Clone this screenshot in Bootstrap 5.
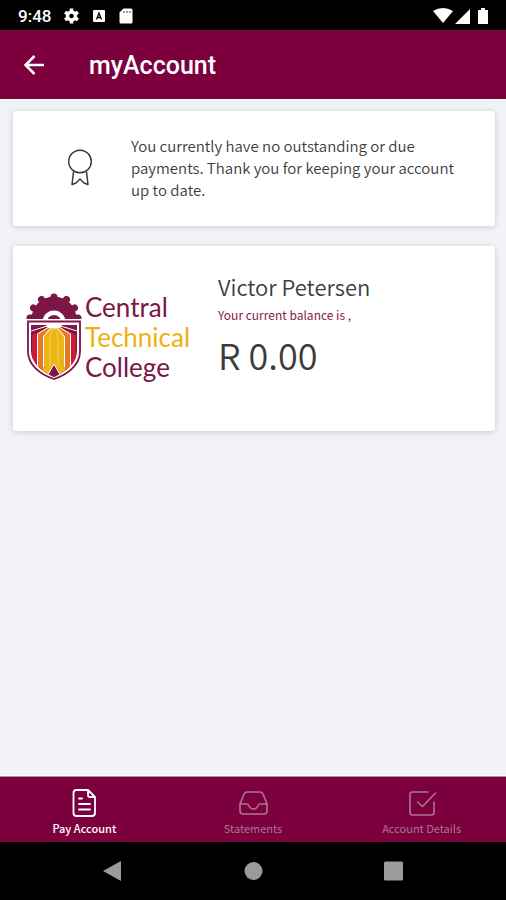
<!DOCTYPE html>
<html lang="en">
<head>
<meta charset="utf-8">
<meta name="viewport" content="width=device-width, initial-scale=1">
<title>myAccount</title>
<link href="https://cdn.jsdelivr.net/npm/bootstrap@5.3.0/dist/css/bootstrap.min.css" rel="stylesheet">
<style>
:root { --wine: #7c003d; }
body { font-family: "Noto Sans CJK SC", "Noto Sans", sans-serif; background: #f1f3f6; color: #3c3c3c; }
svg { display: block; flex: none; }
.status-bar { height: 30px; padding: 2px 16px 0 18px; gap: 12px; font: 500 17px/28px Roboto, sans-serif; }
.app-bar { background: var(--wine); height: 69px; padding: 4px 20px 0; gap: 42px; border-bottom: 1px solid #65102f; }
.app-bar h1 { font: 500 25px/32px Roboto, sans-serif; }
.panel { border: 0; border-radius: 3px; box-shadow: 0 1px 6px rgba(0, 0, 0, .17); }
.content { padding: 12px 11px 0 13px; gap: 20px; border-bottom: 1px solid #fff; }
.notice { padding: 24px 30px 25px 52px; gap: 36px; font-size: 15px; line-height: 22px; font-weight: 350; }
.account { padding: 24px 13px 28px; gap: 30px; min-height: 185px; }
.brand { gap: 3px; color: #7b1647; font: 26px/30px Lato, sans-serif; width: 162px; }
.brand .gold { color: #eeb111; }
.holder { font-size: 22px; line-height: 32px; font-weight: 350; }
.caption { font-size: 12px; line-height: 26px; color: #86204e; }
.amount { font-size: 36px; line-height: 52px; font-weight: 350; }
.tabs { background: var(--wine); height: 66px; border-top: 1px solid #b98ba0; }
.tabs a { color: #ab7690; font-size: 11px; line-height: 16px; padding-top: 10px; gap: 1px; }
.tabs a.active { color: #fff; font-weight: 500; }
.system-bar { height: 58px; }
</style>
<script src="https://cdn.jsdelivr.net/npm/bootstrap@5.3.0/dist/js/bootstrap.bundle.min.js"></script>
</head>
<body class="d-flex flex-column min-vh-100">
<div class="status-bar bg-black text-white d-flex align-items-center">
  <span>9:48</span>
  <svg width="70" height="18" viewBox="-4 0 70 18" fill="#fff" aria-hidden="true">
    <circle cx="4.500" cy="9" r="4" fill="none" stroke="#fff" stroke-width="3.400"/>
    <path d="M4.500 1.500v3M4.500 13.500v3M-2 5.200l3 1.800M8 11l3 1.800M11 5.200L8 7M1 11l-3 1.800" stroke="#fff" stroke-width="3.600"/>
    <rect x="26" y="3" width="12" height="12" rx="1"/>
    <path d="M29.500 12.500L32 6l2.500 6.500M30.500 10.500h3" fill="none" stroke="#000" stroke-width="1.300"/>
    <path d="M56.500 1.500H64q1.500 0 1.500 1.500v12q0 1.500-1.500 1.500H54q-1.500 0-1.500-1.500V5.500z"/>
    <path d="M57 4v2M60 4v2M63 4v2" stroke="#555" stroke-width="1.100"/>
  </svg>
  <svg class="ms-auto" width="57" height="18" viewBox="0 0 57 18" fill="#fff" aria-hidden="true">
    <path d="M0 4Q10 -2 20 4L10 16z"/><path d="M22 17L37 2v15z"/><path d="M48 1h4v2h3v14H45V3h3z"/>
  </svg>
</div>
<header class="app-bar d-flex align-items-center text-white">
  <button type="button" class="btn p-0 border-0 text-white" aria-label="Back">
    <svg width="27" height="24" viewBox="0 0 27 24" fill="none" stroke="currentColor" stroke-width="2.500"><path d="M24 11H5.500M14.500 2l-9 9 9 9"/></svg>
  </button>
  <h1 class="m-0">myAccount</h1>
</header>
<main class="content flex-grow-1 d-flex flex-column">
  <section class="card panel notice flex-row align-items-center">
    <svg width="30" height="40" viewBox="0 0 30 40" fill="none" stroke="#333" stroke-width="1.400" stroke-linejoin="round" aria-hidden="true">
      <circle cx="15" cy="13.500" r="11.300"/><path d="M8.500 23.500L7 36.500l4-1.500 4-4 4 4 4 1.500-1.500-13"/>
    </svg>
    <p class="m-0">You currently have no outstanding or due payments. Thank you for keeping your account up to date.</p>
  </section>
  <section class="card panel account flex-row">
    <div class="brand d-flex align-items-center flex-shrink-0">
      <svg width="56" height="88" viewBox="0 0 56 88" aria-hidden="true">
        <defs>
          <clipPath id="upper"><path d="M0 0h56v26H0z"/></clipPath>
          <clipPath id="crest"><path d="M5 32h46v26c0 11-10 20-23 26C15 78 5 69 5 58z"/></clipPath>
        </defs>
        <g clip-path="url(#upper)">
          <circle cx="28" cy="26" r="22.500" fill="#7b1647"/>
          <path d="M28 26V4M28 26l12.500-19.500M28 26L15.500 6.500M28 26l20.500-11M28 26L7.500 15M4 25h48" stroke="#7b1647" stroke-width="7" stroke-linecap="round"/>
          <circle cx="28" cy="29" r="11.500" fill="#fff"/><circle cx="28" cy="29" r="7" fill="#7b1647"/>
        </g>
        <path d="M2 28.500h52v30C54 71 43 81 28 86 13 81 2 71 2 58.500z" fill="#fff" stroke="#7b1647" stroke-width="1.800"/>
        <g clip-path="url(#crest)">
          <path d="M4 31h48v55H4z" fill="#7b1647"/>
          <path d="M28 31L6 42v45h44V42z" fill="#c91d37"/>
          <path d="M26 32l-15 9v46h34V41l-15-9z" fill="#e8772a"/>
          <path d="M26 32l-9 11v44h22V43l-9-11z" fill="#ecb516"/>
          <path d="M5 33h46L40 35l-9-2h-6l-9 2z" fill="#8d1743"/>
          <path d="M28 31L5 38M28 31l23 7M28 31L11.500 41v45M28 31l16.500 10v45M28 31L17.500 44v30M28 31l10.500 13v30" fill="none" stroke="#fff" stroke-width="1"/>
          <path d="M28 31l-4 14v28M28 31l4 14v28" fill="none" stroke="#f7dc8c" stroke-width=".6"/>
          <path d="M28 71l-9 16h18z" fill="#7b1647" stroke="#fff" stroke-width="1"/>
          <ellipse cx="28" cy="33" rx="8" ry="2.500" fill="#fff"/>
        </g>
      </svg>
      <div>Central<br><span class="gold">Technical</span><br>College</div>
    </div>
    <div>
      <div class="holder">Victor Petersen</div>
      <div class="caption">Your current balance is ,</div>
      <div class="amount">R 0.00</div>
    </div>
  </section>
</main>
<nav class="tabs d-flex text-center" aria-label="Account sections">
  <a href="#pay" class="active col-4 d-flex flex-column align-items-center text-decoration-none" aria-current="page">
    <svg width="28" height="32" viewBox="0 0 28 32" fill="none" stroke="currentColor" stroke-width="1.800" stroke-linecap="round" stroke-linejoin="round"><path d="M18 3H6.500Q3.500 3 3.500 6v20q0 3 3 3H22q3 0 3-3V10zV8q0 2 2 2h5M9 11.500h3M9 17h11M9 22.500h11"/></svg>
    Pay Account</a>
  <a href="#statements" class="col-4 d-flex flex-column align-items-center text-decoration-none">
    <svg width="30" height="32" viewBox="0 0 30 32" fill="none" stroke="currentColor" stroke-width="1.600" stroke-linejoin="round"><path d="M2 17L6 7q1-2 3-2h13q2 0 3 2l4 10v7q0 3-3 3H5q-3 0-3-3zh7q1.500 0 2 2 1.500 3 4.500 3t4.500-3q.5-2 2-2h7"/></svg>
    Statements</a>
  <a href="#details" class="col-4 d-flex flex-column align-items-center text-decoration-none">
    <svg width="30" height="32" viewBox="0 0 30 32" fill="none" stroke="currentColor" stroke-width="1.600" stroke-linecap="round" stroke-linejoin="round"><path d="M21 5H5.500Q3 5 3 7.500v18Q3 28 5.500 28h19q2.500 0 2.500-2.500V15M10.500 15l5 4.500L28.500 6"/></svg>
    Account Details</a>
</nav>
<footer class="system-bar bg-black d-flex justify-content-center align-items-center">
  <svg width="302" height="22" viewBox="0 0 302 22" fill="#9b9b9b" aria-hidden="true"><path d="M1 11L19 1v20z"/><circle cx="151.500" cy="11" r="9"/><rect x="282" y="1.500" width="19" height="19" rx="1.500"/></svg>
</footer>
</body>
</html>
